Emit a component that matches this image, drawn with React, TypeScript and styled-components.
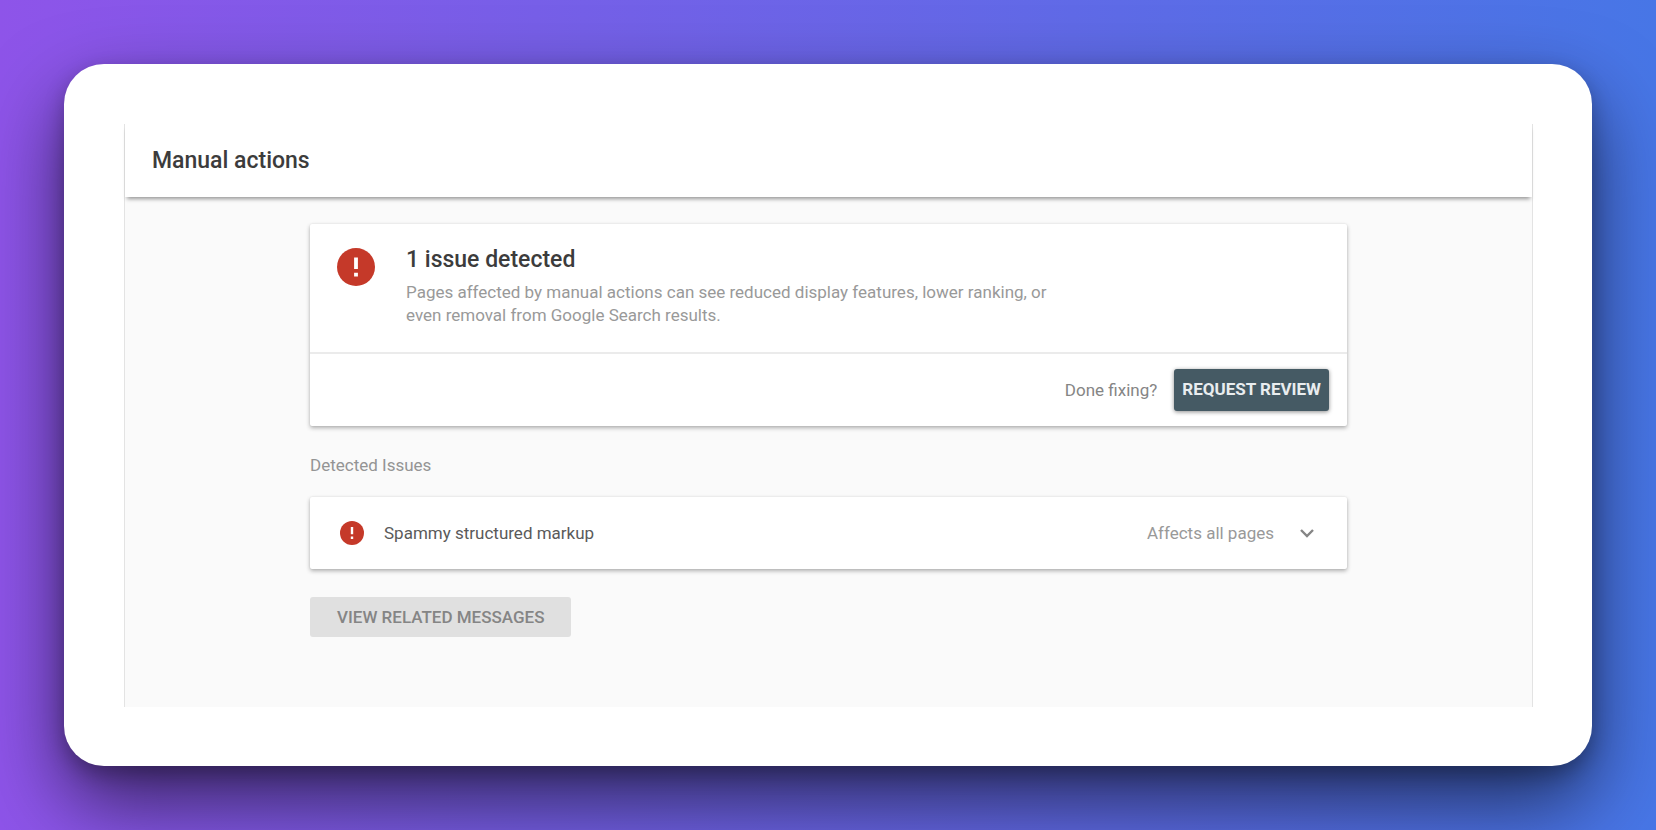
import React from "react";
import styled, { createGlobalStyle } from "styled-components";

const GlobalStyle = createGlobalStyle`
  *, *::before, *::after { box-sizing: border-box; }
  body {
    margin: 0;
    font-family: Roboto, "Liberation Sans", sans-serif;
    font-size: 17px;
    line-height: 23px;
    color: #3c3c3c;
  }
  h1, h2, h3, p { margin: 0; }
  button { font-family: inherit; cursor: pointer; }
`;

const Backdrop = styled.div`
  min-height: 100vh;
  display: flex;
  padding: 64px;
  background: linear-gradient(to right, #8e54e9, #4776e6);
`;

const Sheet = styled.div`
  flex: 1;
  display: flex;
  padding: 60px 59px 59px 60px;
  border-radius: 40px;
  background: #ffffff;
  box-shadow: 0 36px 80px rgba(0, 0, 0, 0.6), 0 8px 20px rgba(0, 0, 0, 0.25);
`;

const Panel = styled.main`
  flex: 1;
  border: solid #e3e3e3;
  border-width: 0 1px;
  background: #fafafa;
`;

const Header = styled.header`
  padding: 25px 27px;
  background: #ffffff;
  box-shadow: 0 4px 4px -2px rgba(0, 0, 0, 0.4);
`;

const Title = styled.h1`
  font-size: 23px;
  line-height: 23px;
  font-weight: 500;
`;

const Content = styled.div`
  width: 74%;
  max-width: 1037px;
  margin: 0 auto;
  padding: 27px 0;
`;

const Card = styled.section`
  border-radius: 2px;
  background: #ffffff;
  box-shadow: 0 2px 4px rgba(0, 0, 0, 0.3), 0 0 2px rgba(0, 0, 0, 0.08);
`;

const Summary = styled.div`
  display: flex;
  gap: 31px;
  padding: 24px 27px 25px;
  border-bottom: 2px solid #ebebeb;
`;

const SummaryText = styled.div`
  max-width: 660px;
  color: #999999;
`;

const SummaryTitle = styled.h2`
  margin-bottom: 10px;
  color: #3c3c3c;
  font-size: 23px;
  line-height: 23px;
  font-weight: 500;
`;

const CardFooter = styled.div`
  display: flex;
  align-items: center;
  justify-content: flex-end;
  gap: 17px;
  padding: 15px 18px;
  color: #858585;
`;

const PrimaryButton = styled.button`
  height: 42px;
  padding: 0 8px 2px;
  border: 0;
  border-radius: 3px;
  background: #455a64;
  color: #e9edef;
  font-size: 17px;
  font-weight: 700;
  box-shadow: 0 1px 4px rgba(0, 0, 0, 0.45);
`;

const SectionLabel = styled.h3`
  padding: 28px 0 20px;
  color: #949494;
  font-size: 17px;
  line-height: 23px;
  font-weight: 400;
`;

const IssueRow = styled.button`
  width: 100%;
  display: flex;
  align-items: center;
  padding: 24px 31px 24px 30px;
  border: 0;
  background: none;
  font-size: 17px;
  line-height: 24px;
  text-align: left;
`;

const IssueName = styled.span`
  flex: 1;
  margin-left: 20px;
  color: #5a5a5a;
`;

const IssueScope = styled.span`
  margin-right: 24px;
  color: #999999;
`;

const SecondaryButton = styled.button`
  height: 40px;
  margin-top: 28px;
  padding: 0 27px;
  border: 0;
  border-radius: 3px;
  background: #e0e0e0;
  color: #858585;
  font-size: 17px;
  font-weight: 500;
`;

const Icon = styled.svg<{ $size: number }>`
  display: block;
  flex: none;
  width: ${(p) => p.$size}px;
  height: ${(p) => p.$size}px;
`;

const AlertIcon = ({ size }: { size: number }) => (
  <Icon $size={size} viewBox="0 0 20 20" aria-hidden="true">
    <circle cx="10" cy="10" r="10" fill="#c53929" />
    <path d="M9 5h2v6H9zM9 13h2v2H9z" fill="#ffffff" />
  </Icon>
);

const ChevronDown = () => (
  <Icon $size={18} viewBox="0 0 18 18" aria-hidden="true">
    <path d="M3 6l6 6 6-6" fill="none" stroke="#858585" strokeWidth="2.4" />
  </Icon>
);

export default function App() {
  return (
    <>
      <GlobalStyle />
      <Backdrop>
        <Sheet>
          <Panel>
            <Header>
              <Title>Manual actions</Title>
            </Header>
            <Content>
              <Card>
                <Summary>
                  <AlertIcon size={38} />
                  <SummaryText>
                    <SummaryTitle>1 issue detected</SummaryTitle>
                    <p>
                      Pages affected by manual actions can see reduced display features, lower
                      ranking, or even removal from Google Search results.
                    </p>
                  </SummaryText>
                </Summary>
                <CardFooter>
                  <span>Done fixing?</span>
                  <PrimaryButton type="button">REQUEST REVIEW</PrimaryButton>
                </CardFooter>
              </Card>
              <SectionLabel>Detected Issues</SectionLabel>
              <Card>
                <IssueRow type="button" aria-expanded={false}>
                  <AlertIcon size={24} />
                  <IssueName>Spammy structured markup</IssueName>
                  <IssueScope>Affects all pages</IssueScope>
                  <ChevronDown />
                </IssueRow>
              </Card>
              <SecondaryButton type="button">VIEW RELATED MESSAGES</SecondaryButton>
            </Content>
          </Panel>
        </Sheet>
      </Backdrop>
    </>
  );
}
